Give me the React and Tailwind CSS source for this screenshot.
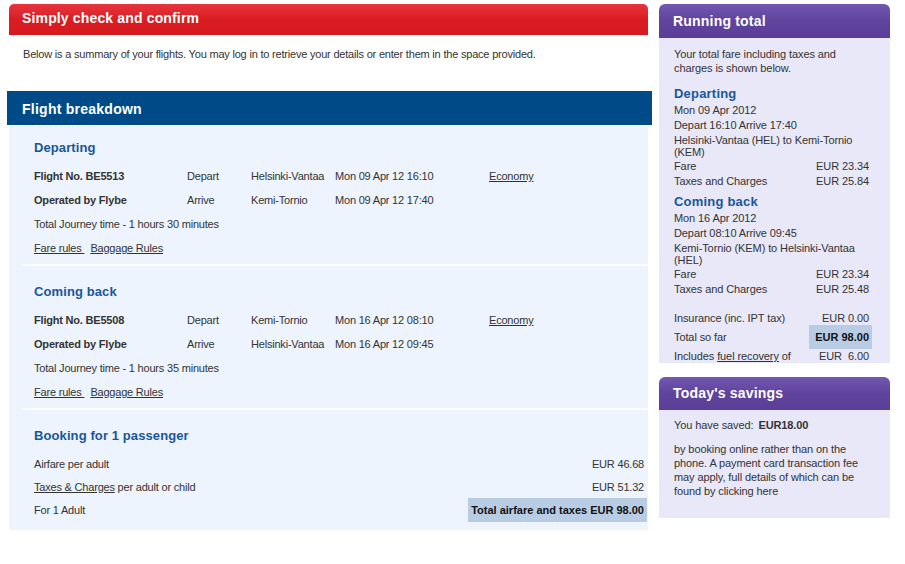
import React from "react";

const Row = ({ label, dir, city, date, economy }) => (
  <div className="grid grid-cols-[153px_64px_84px_154px_1fr] h-[24px] items-center">
    <span className="font-bold">{label}</span>
    <span>{dir}</span>
    <span>{city}</span>
    <span>{date}</span>
    <span>{economy ? <span className="underline">Economy</span> : null}</span>
  </div>
);

const FlightSection = ({ title, rows, journey, first }) => (
  <div className={first ? "pt-[11px]" : "pt-[15px]"}>
    <div className="px-[25px]">
      <div className="h-[22px] flex items-center text-[13px] font-bold text-[#1a5697] tracking-[0.1px]">{title}</div>
      <div className="mt-[5px] tracking-[-0.2px]">
        {rows.map((r, i) => (
          <Row key={i} {...r} />
        ))}
        <div className="h-[24px] flex items-center">Total Journey time - {journey}</div>
        <div className="h-[23px] flex items-center">
          <span className="underline">Fare rules&nbsp;</span>
          <span className="ml-[6px] underline">Baggage Rules</span>
        </div>
      </div>
    </div>
    <div className="mt-[5px] ml-[13px] mr-[1px] h-[2px] bg-white" />
  </div>
);

const MoneyRow = ({ label, amount, h = "h-[15px]" }) => (
  <div className={`flex justify-between items-center ${h}`}>
    <span>{label}</span>
    <span className="w-[63px] text-right pr-[3px]">{amount}</span>
  </div>
);

export default function App() {
  return (
    <div className="w-[905px] h-[564px] bg-white flex items-start pt-[4px] pl-[7px] text-[11px] leading-[14px] text-[#333] font-['Liberation_Sans',Arial,sans-serif]">
      {/* Left column */}
      <div className="w-[645px] flex flex-col">
        <div className="ml-[2px] w-[639px] h-[31px] rounded-t-[5px] bg-linear-to-b from-[#e6353d] via-[#da1c23] to-[#d71920] px-[13px] pb-[3px] flex items-center text-white font-bold text-[14px] tracking-[0.15px]">
          Simply check and confirm
        </div>
        <div className="h-[56px] pt-[12px] pl-[16px] tracking-[-0.2px]">
          Below is a summary of your flights. You may log in to retrieve your details or enter them in the space provided.
        </div>
        <div className="h-[34px] bg-[#004b87] px-[15px] pt-[2px] flex items-center text-white font-bold text-[14px] tracking-[0.25px]">
          Flight breakdown
        </div>
        <div className="mt-[1px] ml-[2px] w-[639px] bg-[#edf4fe] pb-[8px]">
          <FlightSection
            first
            title="Departing"
            rows={[
              { label: "Flight No. BE5513", dir: "Depart", city: "Helsinki-Vantaa", date: "Mon 09 Apr 12 16:10", economy: true },
              { label: "Operated by Flybe", dir: "Arrive", city: "Kemi-Tornio", date: "Mon 09 Apr 12 17:40" },
            ]}
            journey="1 hours 30 minutes"
          />
          <FlightSection
            title="Coming back"
            rows={[
              { label: "Flight No. BE5508", dir: "Depart", city: "Kemi-Tornio", date: "Mon 16 Apr 12 08:10", economy: true },
              { label: "Operated by Flybe", dir: "Arrive", city: "Helsinki-Vantaa", date: "Mon 16 Apr 12 09:45" },
            ]}
            journey="1 hours 35 minutes"
          />
          <div className="pt-[15px] pl-[25px] pr-[1px]">
            <div className="h-[22px] flex items-center text-[13px] font-bold text-[#1a5697] tracking-[0.1px]">Booking for 1 passenger</div>
            <div className="mt-[5px] tracking-[-0.2px]">
              <div className="h-[23px] flex items-center justify-between">
                <span>Airfare per adult</span>
                <span className="w-[179px] text-right pr-[3px]">EUR 46.68</span>
              </div>
              <div className="h-[23px] flex items-center justify-between">
                <span>
                  <span className="underline">Taxes &amp; Charges</span> per adult or child
                </span>
                <span className="w-[179px] text-right pr-[3px]">EUR 51.32</span>
              </div>
              <div className="h-[24px] flex items-center justify-between">
                <span>For 1 Adult</span>
                <span className="w-[179px] h-[24px] flex items-center justify-end pr-[3px] bg-[#b8cce4] font-bold tracking-[0px] text-[#111]">
                  Total airfare and taxes EUR 98.00
                </span>
              </div>
            </div>
          </div>
        </div>
      </div>

      {/* Right column */}
      <div className="ml-[7px] w-[231px] flex flex-col tracking-[-0.1px]">
        <div className="h-[34px] rounded-t-[6px] bg-linear-to-b from-[#7258b0] via-[#5f439c] to-[#5a3e98] px-[14px] pb-[1px] flex items-center text-white font-bold text-[14px] tracking-[0.2px]">
          Running total
        </div>
        <div className="bg-[#e8e8f9] pl-[15px] pr-[18px] pt-[9px] h-[325px]">
          <div className="pr-[8px]">Your total fare including taxes and charges is shown below.</div>
          <div className="mt-[10px] h-[18px] flex items-center text-[13px] font-bold text-[#1a5697] tracking-[0.2px]">Departing</div>
          <div className="-mt-[1px] h-[15px] flex items-center">Mon 09 Apr 2012</div>
          <div className="h-[15px] flex items-center">Depart 16:10 Arrive 17:40</div>
          <div className="pt-[2px] leading-[12px]">Helsinki-Vantaa (HEL) to Kemi-Tornio (KEM)</div>
          <MoneyRow label="Fare" amount="EUR 23.34" />
          <MoneyRow label="Taxes and Charges" amount="EUR 25.84" />
          <div className="mt-[5px] h-[18px] flex items-center text-[13px] font-bold text-[#1a5697] tracking-[0.2px]">Coming back</div>
          <div className="-mt-[1px] h-[15px] flex items-center">Mon 16 Apr 2012</div>
          <div className="h-[15px] flex items-center">Depart 08:10 Arrive 09:45</div>
          <div className="pt-[2px] leading-[12px]">Kemi-Tornio (KEM) to Helsinki-Vantaa (HEL)</div>
          <MoneyRow label="Fare" amount="EUR 23.34" />
          <MoneyRow label="Taxes and Charges" amount="EUR 25.48" />
          <div className="mt-[15px]">
            <MoneyRow label="Insurance (inc. IPT tax)" amount="EUR 0.00" h="h-[14px]" />
            <div className="flex justify-between items-center h-[24px]">
              <span>Total so far</span>
              <span className="w-[63px] h-[24px] flex items-center justify-end pr-[3px] bg-[#b8cce4] font-bold text-[#111] tracking-[0px]">EUR 98.00</span>
            </div>
            <div className="flex justify-between items-center h-[14px]">
              <span>
                Includes <span className="underline">fuel recovery</span> of
              </span>
              <span className="w-[63px] flex justify-between pl-[10px] pr-[3px]">
                <span>EUR</span>
                <span>6.00</span>
              </span>
            </div>
          </div>
        </div>

        <div className="mt-[14px] h-[33px] rounded-t-[6px] bg-linear-to-b from-[#7258b0] via-[#5f439c] to-[#5a3e98] px-[14px] pb-[1px] flex items-center text-white font-bold text-[14px] tracking-[0.2px]">
          Today&apos;s savings
        </div>
        <div className="bg-[#e8e8f9] pl-[15px] pr-[14px] pt-[8px] h-[108px]">
          <div>
            You have saved: <span className="font-bold ml-[2px]">EUR18.00</span>
          </div>
          <div className="mt-[10px]">
            by booking online rather than on the phone. A payment card transaction fee may apply, full details of which can be found by clicking here
          </div>
        </div>
      </div>
    </div>
  );
}
